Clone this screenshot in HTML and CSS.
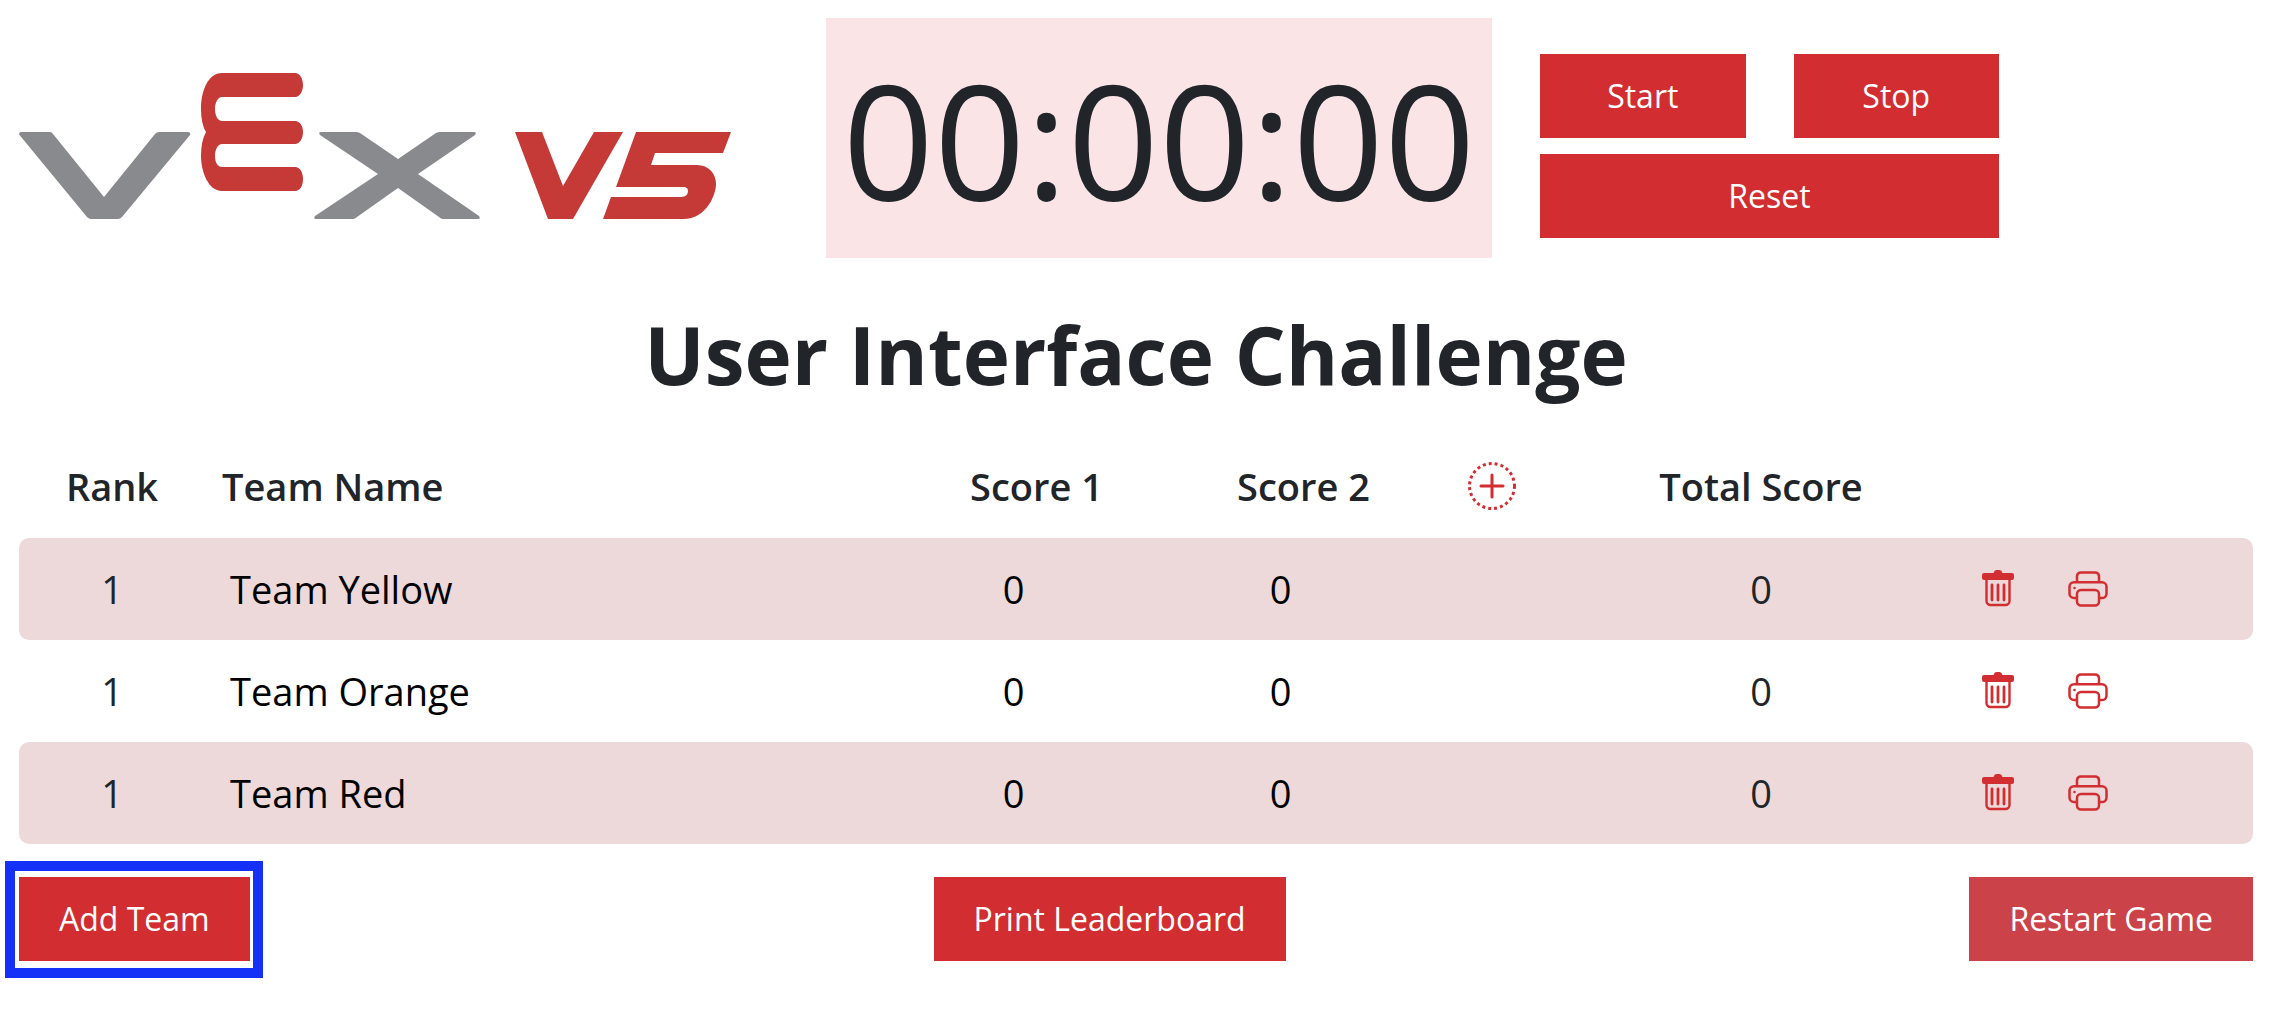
FILE: index.html
```
<!DOCTYPE html>
<html lang="en">
<head>
    <meta charset="UTF-8">
    <meta name="viewport" content="width=device-width, initial-scale=1.0">
    <title>User Interface Challenge</title>
    <link rel="stylesheet" href="styles.css">
</head>
<body>
    <svg class="sprite" aria-hidden="true">
        <symbol id="trash" viewBox="0 0 32 38">
            <path d="M4.500 9v22a4 4 0 0 0 4 4h15a4 4 0 0 0 4-4V9" fill="none" stroke="currentColor" stroke-width="2.400"/>
            <path d="M2 3h9.500q.8-3 3-3h3q2.200 0 3 3H30a2 2 0 0 1 2 2v3a2 2 0 0 1-2 2H2a2 2 0 0 1-2-2V5a2 2 0 0 1 2-2z" fill="currentColor"/>
            <path d="M10 15v15M16 15v15M22 15v15" fill="none" stroke="currentColor" stroke-width="2.800" stroke-linecap="round"/>
        </symbol>
        <symbol id="printer" viewBox="0 0 40 36">
            <g fill="none" stroke="currentColor" stroke-width="2.500">
                <path d="M9 11V5a4 4 0 0 1 4-3.500h14a4 4 0 0 1 4 3.500v6"/>
                <path d="M9 27H6a4.500 4.500 0 0 1-4.500-4.500v-7A4.500 4.500 0 0 1 6 11.200h28a4.500 4.500 0 0 1 4.500 4.500v7A4.500 4.500 0 0 1 34 27h-3"/>
                <rect x="9" y="19" width="22" height="15.500" rx="4"/>
            </g>
            <circle cx="6.500" cy="17" r="1.300" fill="currentColor"/>
        </symbol>
    </svg>

    <div class="container">
        <header class="top">
            <svg class="logo" viewBox="0 0 712 147" role="img" aria-label="VEX V5">
                <g fill="#898a8d">
                    <path d="M2 59h29q2 0 3 2l51 63 51-63q2-2 4-2h29q3 0 2 3l-68 82q-2 2-4 2H72q-2 0-4-2L.500 62q-1-3 1.500-3z"/>
                    <path d="M302 59h35q2 0 4 1l38 26 38-26q2-1 4-1h34q3 0 1 3l-57 39 61 42q2 3-1 3h-35q-2 0-4-2l-41-29-41 29q-2 2-4 2h-37q-3 0-1-3l63-42-58-39q-2-3 1-3z"/>
                </g>
                <g fill="#c53a37">
                    <path d="M203 0h73c5 0 8 6 8 12s-3 12-8 12h-73c-4 0-7 5-7 12s3 12 7 12h73c5 0 8 5 8 11s-3 12-8 12h-73c-4 0-7 5-7 12s3 11 7 11h73c5 0 8 5 8 12s-3 12-8 12h-73c-14 0-21-20-21-35q0-15 5-24q-5-8-5-23C182 18 189 0 203 0z"/>
                    <path d="M496 59h27l21 54 31-54h29l-50 87h-25z"/>
                    <path d="M617 59h95l-8 21h-68l-4 12h46c12 0 19 9 19 19s-9 35-33 35h-80l8-22h70c5 0 7-3 7-6s-2-4-4-4h-68z"/>
                </g>
            </svg>
            <div class="timer">00:00:00</div>
            <div class="controls">
                <button type="button" class="btn">Start</button>
                <button type="button" class="btn">Stop</button>
                <button type="button" class="btn reset">Reset</button>
            </div>
        </header>

        <h1>User Interface Challenge</h1>

        <table class="board">
            <colgroup>
                <col class="col-rank">
                <col>
                <col class="col-score">
                <col class="col-score">
                <col class="col-add">
                <col class="col-total">
                <col class="col-actions">
            </colgroup>
            <thead>
                <tr>
                    <th>Rank</th>
                    <th class="name">Team Name</th>
                    <th class="score">Score 1</th>
                    <th class="score">Score 2</th>
                    <th>
                        <button type="button" class="icon-btn" aria-label="Add score">
                            <svg class="plus" viewBox="0 0 48 48">
                                <circle cx="24" cy="24" r="22.500"/>
                                <path d="M24 13v22M13 24h22"/>
                            </svg>
                        </button>
                    </th>
                    <th>Total Score</th>
                    <th></th>
                </tr>
            </thead>
            <tbody>
                <tr>
                    <td>1</td>
                    <td class="name"><input type="text" value="Team Yellow" aria-label="Team name"></td>
                    <td><input type="text" value="0" aria-label="Score 1"></td>
                    <td><input type="text" value="0" aria-label="Score 2"></td>
                    <td></td>
                    <td>0</td>
                    <td>
                        <div class="actions">
                            <button type="button" class="icon-btn" aria-label="Delete team"><svg class="trash"><use href="#trash"/></svg></button>
                            <button type="button" class="icon-btn" aria-label="Print team"><svg class="printer"><use href="#printer"/></svg></button>
                        </div>
                    </td>
                </tr>
                <tr>
                    <td>1</td>
                    <td class="name"><input type="text" value="Team Orange" aria-label="Team name"></td>
                    <td><input type="text" value="0" aria-label="Score 1"></td>
                    <td><input type="text" value="0" aria-label="Score 2"></td>
                    <td></td>
                    <td>0</td>
                    <td>
                        <div class="actions">
                            <button type="button" class="icon-btn" aria-label="Delete team"><svg class="trash"><use href="#trash"/></svg></button>
                            <button type="button" class="icon-btn" aria-label="Print team"><svg class="printer"><use href="#printer"/></svg></button>
                        </div>
                    </td>
                </tr>
                <tr>
                    <td>1</td>
                    <td class="name"><input type="text" value="Team Red" aria-label="Team name"></td>
                    <td><input type="text" value="0" aria-label="Score 1"></td>
                    <td><input type="text" value="0" aria-label="Score 2"></td>
                    <td></td>
                    <td>0</td>
                    <td>
                        <div class="actions">
                            <button type="button" class="icon-btn" aria-label="Delete team"><svg class="trash"><use href="#trash"/></svg></button>
                            <button type="button" class="icon-btn" aria-label="Print team"><svg class="printer"><use href="#printer"/></svg></button>
                        </div>
                    </td>
                </tr>
            </tbody>
        </table>

        <footer class="bottom">
            <button type="button" class="btn highlight">Add Team</button>
            <button type="button" class="btn">Print Leaderboard</button>
            <button type="button" class="btn restart">Restart Game</button>
        </footer>
    </div>
</body>
</html>
```
FILE: styles.css
```
:root {
    --red: #d22d30;
    --restart: #cb4349;
    --row: #edd9da;
    --timer: #fae4e5;
    --text: #212529;
    --highlight: #1531f8;
}

* {
    margin: 0;
    padding: 0;
    box-sizing: border-box;
}

body {
    font-family: "Open Sans", sans-serif;
    font-size: 38px;
    line-height: 58px;
    color: var(--text);
    background-color: #fff;
}

.sprite {
    position: absolute;
    width: 0;
    height: 0;
}

.container {
    min-height: 100vh;
    padding: 18px 23px 48px 19px;
}

.top {
    display: flex;
    align-items: center;
}

.logo {
    width: 712px;
    height: 147px;
    margin: 16px 95px 0 0;
}

.timer {
    min-width: 666px;
    padding: 0 16px;
    background-color: var(--timer);
    font-size: 160px;
    line-height: 240px;
    text-align: center;
}

.controls {
    display: grid;
    grid-template-columns: 1fr 1fr;
    gap: 16px 48px;
    width: 459px;
    margin: 16px 0 0 48px;
}

.btn {
    height: 84px;
    padding: 0 40px;
    border: none;
    background-color: var(--red);
    color: #fff;
    font: inherit;
    font-size: 32px;
    line-height: 48px;
    cursor: pointer;
}

.reset {
    grid-column: span 2;
}

h1 {
    margin: 48px 0;
    font-size: 80px;
    font-weight: 700;
    line-height: 96px;
    text-align: center;
}

.board {
    width: 100%;
    table-layout: fixed;
    border-collapse: collapse;
    text-align: center;
}

.col-rank { width: 186px; }
.col-score { width: 267px; }
.col-add { width: 156px; }
.col-total { width: 382px; }
.col-actions { width: 301px; }

th {
    height: 88px;
    padding-bottom: 17px;
    font-weight: 600;
}

td {
    height: 102px;
}

.board .name {
    padding-left: 17px;
    text-align: left;
}

th.score {
    padding-left: 46px;
}

tbody tr:nth-child(odd) td {
    background-color: var(--row);
}

td:first-child {
    border-radius: 10px 0 0 10px;
}

td:last-child {
    border-radius: 0 10px 10px 0;
}

td input {
    display: block;
    width: 100%;
    padding: 0 8px;
    border: none;
    background: none;
    font: inherit;
    color: #000;
    text-align: inherit;
}

.icon-btn {
    display: block;
    border: none;
    background: none;
    color: var(--red);
    cursor: pointer;
}

th .icon-btn {
    margin: 0 auto;
}

.icon-btn svg {
    display: block;
}

.plus {
    width: 48px;
    height: 48px;
    fill: none;
    stroke: var(--red);
    stroke-width: 3;
}

.plus circle {
    stroke-dasharray: 3 3;
}

.plus path {
    stroke-linecap: round;
}

.actions {
    display: flex;
    align-items: center;
    gap: 54px;
    padding-left: 30px;
}

.trash {
    width: 32px;
    height: 38px;
}

.printer {
    width: 40px;
    height: 36px;
}

.bottom {
    display: flex;
    justify-content: space-between;
    margin-top: 33px;
}

.restart {
    background-color: var(--restart);
}

.highlight {
    position: relative;
}

/* focus frame drawn around the button */
.highlight::after {
    content: "";
    position: absolute;
    inset: -16px -13px -17px -14px;
    border: 10px solid var(--highlight);
}
```
